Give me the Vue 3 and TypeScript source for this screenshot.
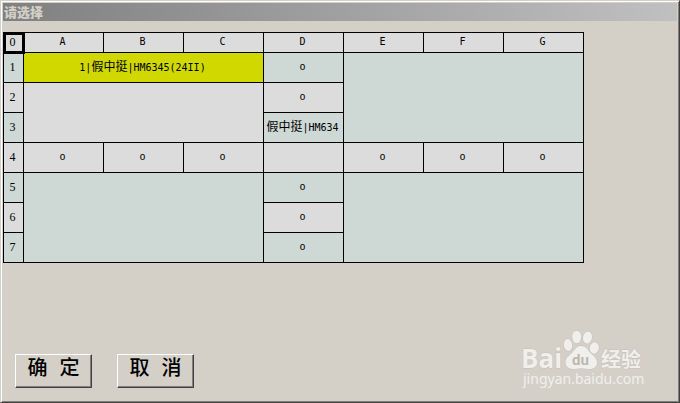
<script setup lang="ts">
interface Part {
  text: string
  han?: boolean
}

interface Cell {
  parts: Part[]
  tone: 'grey' | 'mint' | 'picked'
  cols?: number
  rows?: number
}

interface Row {
  label: number
  cells: Cell[]
}

const columns: string[] = ['A', 'B', 'C', 'D', 'E', 'F', 'G']

const mark = (tone: Cell['tone']): Cell => ({ parts: [{ text: 'o' }], tone })
const blank = (tone: Cell['tone'], cols = 1, rows = 1): Cell => ({ parts: [], tone, cols, rows })

const rows: Row[] = [
  {
    label: 1,
    cells: [
      {
        parts: [{ text: '1|' }, { text: '假中挺', han: true }, { text: '|HM6345(24II)' }],
        tone: 'picked',
        cols: 3,
      },
      mark('mint'),
      blank('mint', 3, 3),
    ],
  },
  { label: 2, cells: [blank('grey', 3, 2), mark('grey')] },
  {
    label: 3,
    cells: [{ parts: [{ text: '假中挺', han: true }, { text: '|HM634' }], tone: 'mint' }],
  },
  {
    label: 4,
    cells: [mark('grey'), mark('grey'), mark('grey'), blank('grey'), mark('grey'), mark('grey'), mark('grey')],
  },
  { label: 5, cells: [blank('mint', 3, 3), mark('mint'), blank('mint', 3, 3)] },
  { label: 6, cells: [mark('grey')] },
  { label: 7, cells: [mark('mint')] },
]
</script>

<template>
  <main class="dialog">
    <header class="titlebar">
      <h1>请选择</h1>
    </header>

    <div class="body">
      <table class="sheet">
        <colgroup>
          <col class="index" />
          <col v-for="c in columns" :key="c" class="data" />
        </colgroup>
        <thead>
          <tr>
            <th class="corner num">0</th>
            <th v-for="c in columns" :key="c" scope="col">{{ c }}</th>
          </tr>
        </thead>
        <tbody>
          <tr v-for="row in rows" :key="row.label">
            <th scope="row" class="num" :class="row.label % 2 ? 'mint' : 'grey'">{{ row.label }}</th>
            <td
              v-for="(cell, i) in row.cells"
              :key="i"
              :class="cell.tone"
              :colspan="cell.cols ?? 1"
              :rowspan="cell.rows ?? 1"
            ><span v-for="(part, j) in cell.parts" :key="j" :class="{ han: part.han }">{{ part.text }}</span></td>
          </tr>
        </tbody>
      </table>
    </div>

    <footer class="actions">
      <button type="button">确 定</button>
      <button type="button">取 消</button>
    </footer>

    <svg class="watermark" viewBox="0 0 130 62" role="img" aria-label="Baidu 经验">
      <g class="halo">
        <text class="brand" x="3" y="38">Bai</text>
        <ellipse cx="50" cy="15" rx="4.2" ry="6" transform="rotate(-8 50 15)" />
        <ellipse cx="58.700" cy="7" rx="4.500" ry="6.200" />
        <ellipse cx="69.500" cy="7.500" rx="4.500" ry="6" transform="rotate(10 69.500 7.500)" />
        <ellipse cx="76.300" cy="18" rx="4.500" ry="5.700" transform="rotate(15 76.300 18)" />
        <path d="M63 16c4.500 0 6.500 3 8.500 6 3 3.500 7.500 5.500 7.500 10.500 0 4-3 6.500-7 6.500-3 0-6-.8-9-.8s-5 .8-8 .8c-5 0-7.500-3-7.500-7 0-4.500 4-6.500 7-9.500 2.500-3 4-6.500 8.500-6.500z" />
        <text class="cn" x="83" y="37">经验</text>
      </g>
      <text class="du" x="54" y="35">du</text>
      <text class="site" x="5" y="54">jingyan.baidu.com</text>
    </svg>
  </main>
</template>

<style>
body {
  background: #d4d0c8;
}
</style>

<style scoped>
.dialog {
  position: relative;
  box-sizing: border-box;
  display: flex;
  flex-direction: column;
  min-height: 100vh;
  padding: 1px;
  border: 1px solid;
  border-color: #d4d0c8 #404040 #404040 #d4d0c8;
  background: #d4d0c8;
  box-shadow: inset 1px 1px #ffffff, inset -1px -1px #808080;
  color: #000000;
}

.titlebar {
  margin: 1px 1px 0;
  padding: 0 1px;
  background: linear-gradient(to right, #808080, #c0c0c0);
}

h1 {
  margin: 0;
  font: 900 13px/18px "Noto Sans CJK SC", sans-serif;
  color: #d4d0c8;
}

.body {
  flex: 1;
  padding: 11px 1px 0;
}

.sheet {
  table-layout: fixed;
  width: 581px;
  border: solid #000000;
  border-width: 1px 0 0 1px;
  border-spacing: 0;
  font: 10px/16px "DejaVu Sans Mono", "Noto Sans CJK SC", monospace;
  text-align: center;
}

.index {
  width: 20px;
}

.data {
  width: 80px;
}

th,
td {
  box-sizing: border-box;
  height: 30px;
  padding: 0 2px 2px 0;
  border: solid #000000;
  border-width: 0 1px 1px 0;
  font-weight: normal;
  white-space: nowrap;
  overflow: hidden;
}

thead th {
  height: 20px;
  background: #dcdcdc;
}

.num {
  font: 12px/16px "Liberation Serif", serif;
}

.corner {
  outline: 3px solid #000000;
  outline-offset: -2px;
}

.grey {
  background: #dcdcdc;
}

.mint {
  background: #ced8d5;
}

.picked {
  background: #d0d800;
}

.han {
  font: 12px/16px "Noto Sans CJK SC", sans-serif;
}

.actions {
  display: flex;
  gap: 25px;
  padding: 0 13px 13px;
}

button {
  width: 77px;
  height: 34px;
  padding: 0 0 2px;
  border: solid;
  border-width: 1px;
  border-color: #ffffff #404040 #404040 #ffffff;
  border-radius: 0;
  background: #d4d0c8;
  box-shadow: inset -1px -1px #808080;
  font: 500 20px/26px "Liberation Mono", "Noto Sans CJK SC", monospace;
  color: #000000;
}

.watermark {
  position: absolute;
  right: 31px;
  bottom: 10px;
  width: 130px;
  height: 62px;
  fill: #f1efec;
}

.halo {
  stroke: #c4c0b8;
  stroke-width: 1px;
  paint-order: stroke;
}

.brand {
  font: bold 26px "Open Sans", sans-serif;
}

.cn {
  font: bold 20px "Noto Sans CJK SC", sans-serif;
}

.du {
  font: bold 15px Roboto, sans-serif;
  fill: #bcb8b0;
}

.site {
  font: 14px "Noto Sans", sans-serif;
}
</style>
